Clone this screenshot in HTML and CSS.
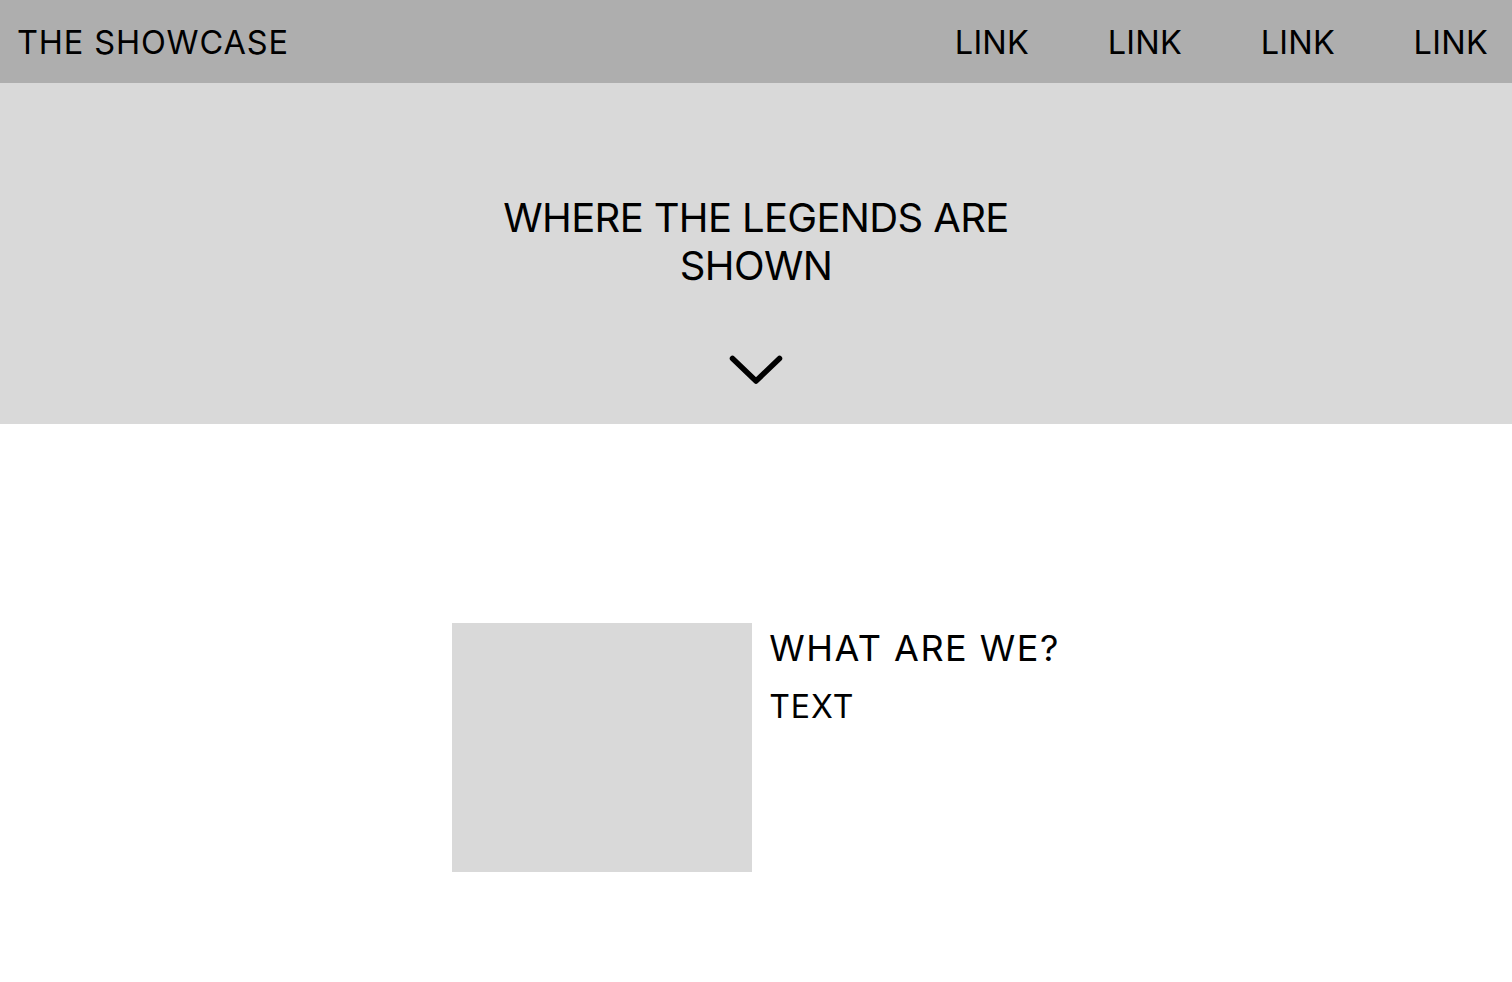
FILE: index.html
```html
<!DOCTYPE html>
<html lang="en">
<head>
<meta charset="utf-8">
<title>The Showcase</title>
<link rel="stylesheet" href="styles.css">
</head>
<body>
<header class="topbar">
  <div class="brand">THE SHOWCASE</div>
  <nav class="nav">
    <a class="nav-link" href="#">LINK</a>
    <a class="nav-link" href="#">LINK</a>
    <a class="nav-link" href="#">LINK</a>
    <a class="nav-link" href="#">LINK</a>
  </nav>
</header>
<section class="hero">
  <h1 class="hero-title">WHERE THE LEGENDS ARE SHOWN</h1>
  <svg class="chevron" width="56" height="32" viewBox="0 0 56 32" aria-hidden="true">
    <polyline points="4.5,4.5 28,27 51.5,4.5" fill="none" stroke="#000" stroke-width="5.5" stroke-linecap="round" stroke-linejoin="round"/>
  </svg>
</section>
<section class="about">
  <div class="about-row">
    <div class="about-image"></div>
    <div class="about-text">
      <h2 class="about-title">WHAT ARE WE?</h2>
      <p class="about-body">TEXT</p>
    </div>
  </div>
</section>
</body>
</html>
```

FILE: styles.css
```css
* { box-sizing: border-box; }
html, body { margin: 0; padding: 0; }
body {
  font-family: Inter, "Noto Sans", sans-serif;
  color: #000;
  background: #fff;
}
.topbar {
  height: 83px;
  background: #aeaeae;
  display: flex;
  align-items: center;
  justify-content: space-between;
  padding: 3px 24px 0 17px;
}
.brand {
  font-size: 32.5px;
  line-height: 1;
  letter-spacing: 0.85px;
}
.nav {
  display: flex;
  gap: 78.5px;
}
.nav-link {
  font-size: 32.5px;
  line-height: 1;
  letter-spacing: 0.25px;
  color: #000;
  text-decoration: none;
}
.hero {
  height: 341px;
  background: #d9d9d9;
  display: flex;
  flex-direction: column;
  align-items: center;
  padding-top: 111px;
}
.hero-title {
  margin: 0;
  max-width: 600px;
  font-size: 40px;
  font-weight: 400;
  line-height: 48px;
  letter-spacing: -0.65px;
  text-align: center;
}
.chevron {
  margin-top: 64px;
}
.about {
  padding: 199px 0 100px;
}
.about-row {
  display: flex;
  justify-content: center;
  gap: 17px;
}
.about-image {
  width: 300px;
  height: 249px;
  background: #d9d9d9;
}
.about-text {
  padding-top: 3px;
}
.about-title {
  margin: 0;
  font-size: 36px;
  font-weight: 400;
  line-height: 44px;
  letter-spacing: 1.5px;
}
.about-body {
  margin: 18px 0 0;
  font-size: 32px;
  line-height: 38px;
  letter-spacing: 1px;
}
```
